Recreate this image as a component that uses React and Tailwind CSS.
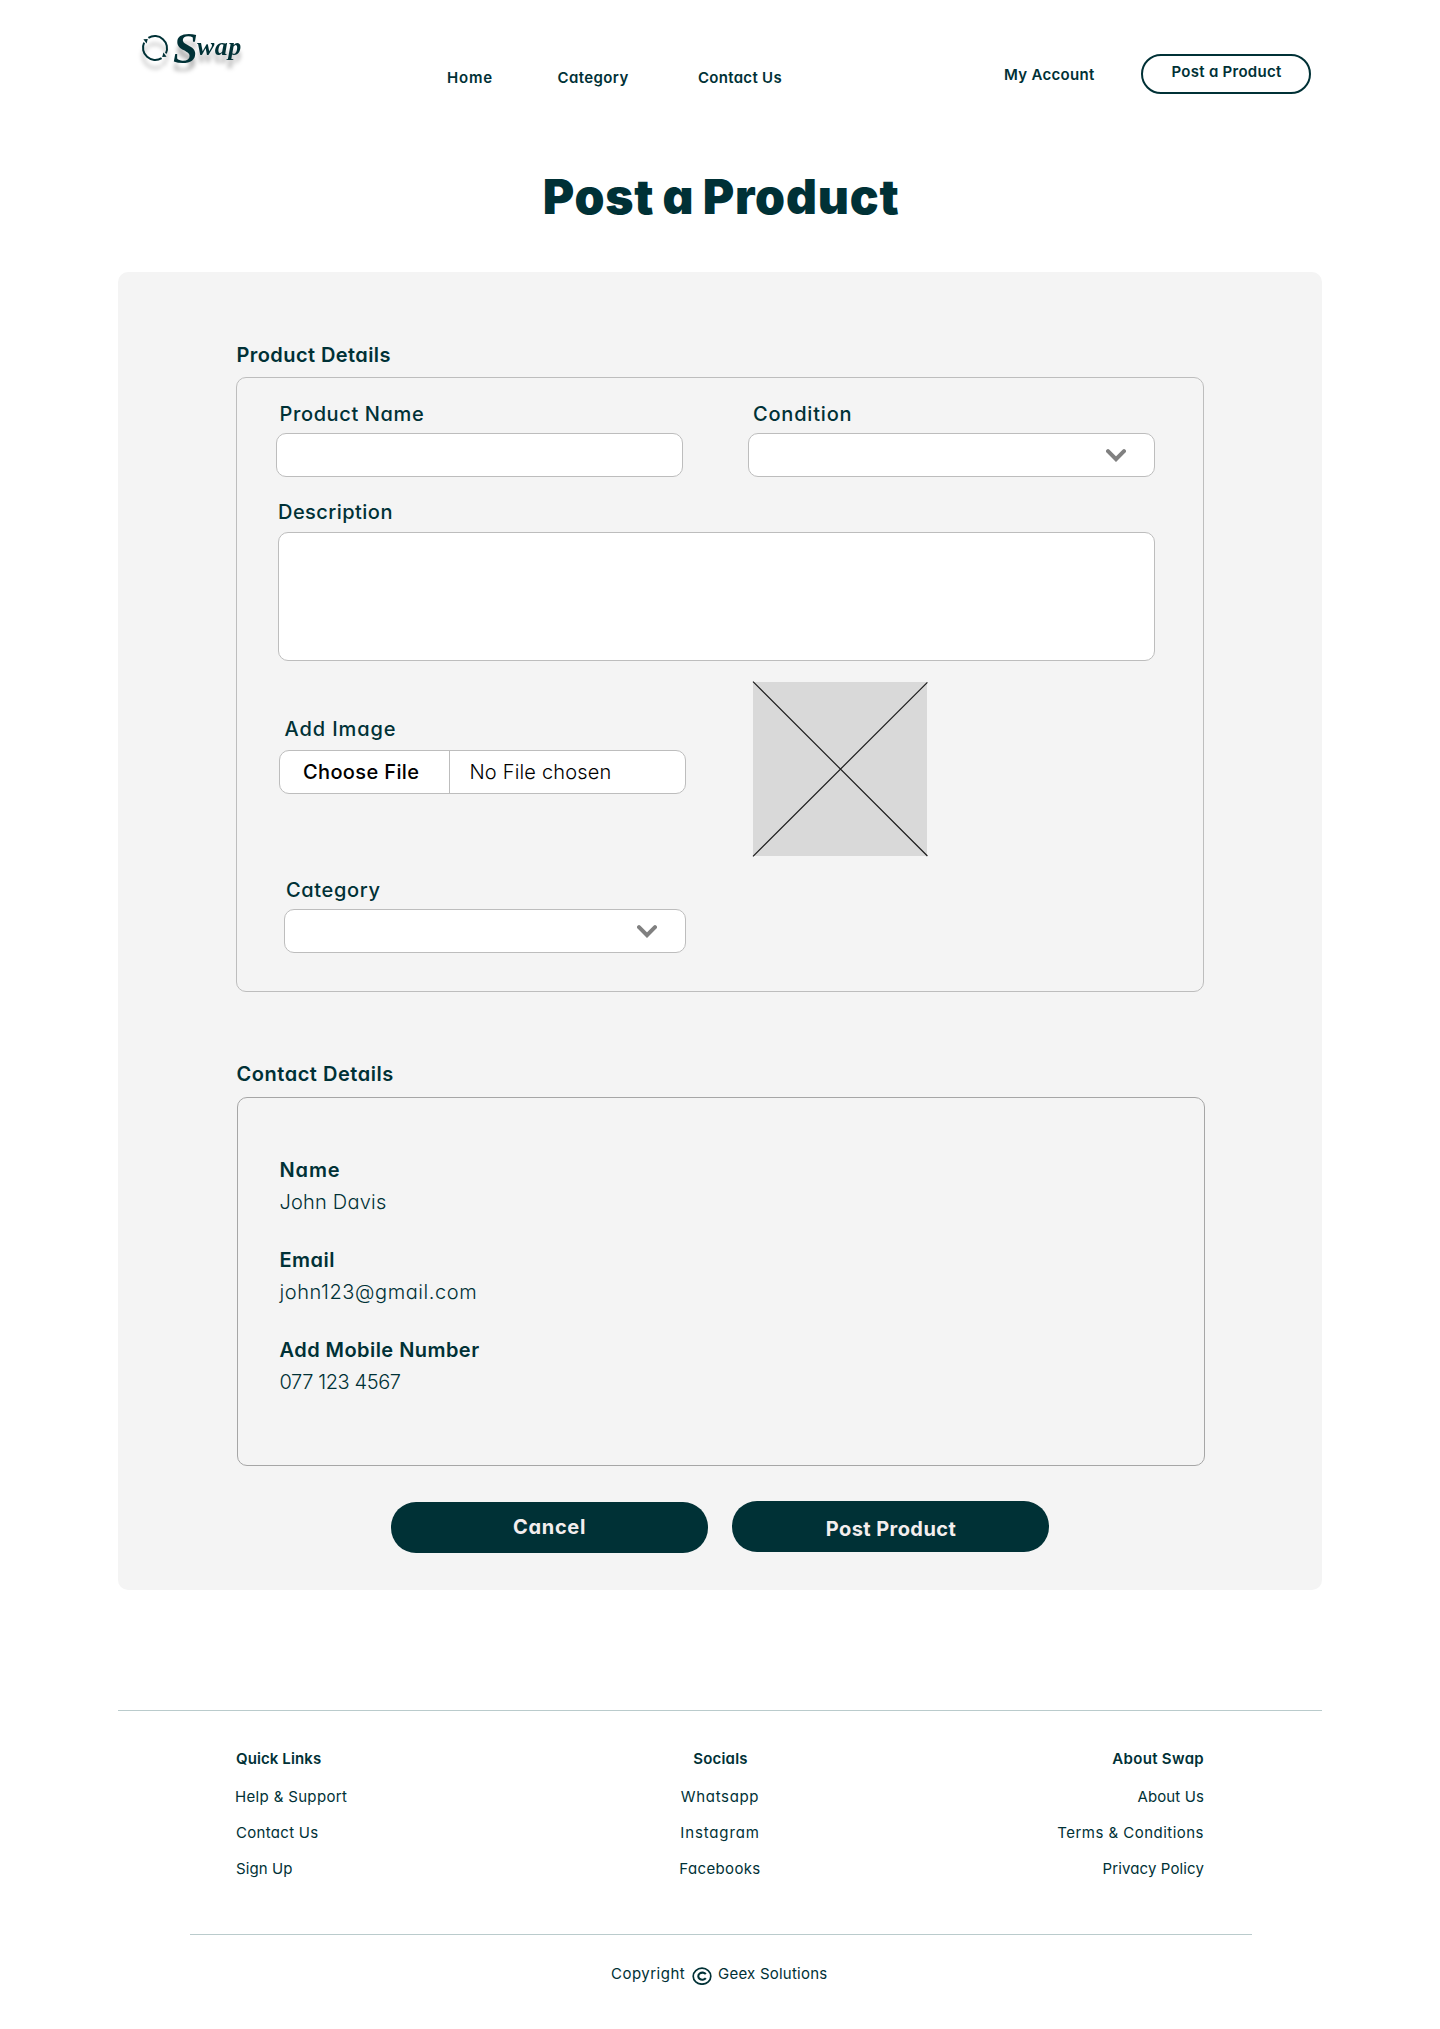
const FIELD = "rounded-[10px] border border-[#bdbdbd] bg-white";
const LABEL = "text-[20px] leading-6 font-medium whitespace-nowrap";
const LINK = "text-[15px] leading-[19px] whitespace-nowrap";

function Chevron() {
  return (
    <svg width="20" height="13" viewBox="0 0 20 13" fill="none" stroke="#808080" strokeWidth="4">
      <path d="M2 2.2 10 10.2 18 2.2" strokeLinecap="round" strokeLinejoin="miter" />
    </svg>
  );
}

function CopyrightMark() {
  return (
    <svg className="mt-[3px] mr-[6px] shrink-0" width="20" height="18" viewBox="0 0 20 18" fill="none" stroke="#003136">
      <ellipse cx="10" cy="9.2" rx="8.8" ry="8" strokeWidth="1.7" />
      <path d="M13.8 7.2A4.1 3.6 0 1 0 13.8 11.2" strokeWidth="2.1" />
    </svg>
  );
}

function Logo() {
  return (
    <div className="flex h-[50px] w-[305px] items-start pt-[9px] drop-shadow-[0_8px_2px_rgba(0,0,0,0.28)]">
      <svg className="mt-[-1px] -ml-px shrink-0" width="28" height="28" viewBox="0 0 28 28" fill="none" stroke="#003136" strokeWidth="2">
        <path d="M7.4 3.9A12.2 12.2 0 0 1 24.9 19.4" />
        <path d="M20.6 24.1A12.2 12.2 0 0 1 3.1 8.6" />
        <path d="M2.4 5.2 6.8 5 5.6 9.4Z" fill="#003136" stroke="none" />
        <path d="M25.6 22.8 21.2 23 22.4 18.6Z" fill="#003136" stroke="none" />
      </svg>
      <div className="ml-[4px] flex items-start font-['Liberation_Serif',serif] font-bold italic">
        <span className="mt-[-11px] text-[45px] leading-[48px]">S</span>
        <span className="-ml-px mt-[-3px] text-[26px] leading-[30px] tracking-[0.5px]">wap</span>
      </div>
    </div>
  );
}

function Header() {
  return (
    <header className="flex h-[167px] items-start pl-[142px] text-[15px] leading-[19px] font-semibold whitespace-nowrap">
      <div className="pt-[26px]"><Logo /></div>
      <nav className="flex pt-[68px]">
        <a className="w-[110.5px] tracking-[0.8px]">Home</a>
        <a className="w-[140.5px] tracking-[0.4px]">Category</a>
        <a className="w-[306px] tracking-[0.3px]">Contact Us</a>
      </nav>
      <a className="w-[137px] pt-[65px] tracking-[0.3px]">My Account</a>
      <button className="mt-[54px] flex h-10 w-[170px] justify-center rounded-[20px] border-2 border-[#003136] pt-[6px] pl-px tracking-[0.27px]">
        Post a Product
      </button>
    </header>
  );
}

function ProductDetails() {
  return (
    <section>
      <h2 className="pl-[0.5px] text-[20px] leading-6 font-semibold tracking-[0.42px]">Product Details</h2>
      <div className="mt-[10px] h-[615px] w-[968px] rounded-[10px] border border-[#bdbdbd] pt-6 pl-[39px]">
        <div className="flex gap-[65px]">
          <div>
            <div className={`${LABEL} pl-[3.5px] tracking-[0.62px]`}>Product Name</div>
            <div className={`${FIELD} mt-[7px] h-11 w-[407px]`} />
          </div>
          <div>
            <div className={`${LABEL} pl-[5px] tracking-[0.8px]`}>Condition</div>
            <div className={`${FIELD} mt-[7px] flex h-11 w-[407px] items-start justify-end pt-[15px] pr-[28px]`}>
              <Chevron />
            </div>
          </div>
        </div>
        <div className="mt-[23px] pl-[2px]">
          <div className={`${LABEL} tracking-[0.46px]`}>Description</div>
          <div className={`${FIELD} mt-2 h-[129px] w-[877px]`} />
        </div>
        <div className="mt-[21px] flex items-start gap-[67px] pl-[3px]">
          <div className="pt-[35px]">
            <div className={`${LABEL} pl-[5.5px] tracking-[0.9px]`}>Add Image</div>
            <div className={`${FIELD} mt-[9px] flex h-11 w-[407px] text-[20px] leading-6 whitespace-nowrap text-black`}>
              <div className="w-[170px] border-r border-[#bdbdbd] pt-[9px] pl-[23px] font-medium tracking-[0.36px]">Choose File</div>
              <div className="pt-[9px] pl-[19.5px] font-light tracking-[0.18px]">No File chosen</div>
            </div>
            <div className={`${LABEL} mt-[84px] pl-[7px] tracking-[0.65px]`}>Category</div>
            <div className={`${FIELD} mt-[7px] ml-[5px] flex h-11 w-[402px] items-start justify-end pt-[15px] pr-[28px]`}>
              <Chevron />
            </div>
          </div>
          <svg className="shrink-0 overflow-visible bg-[#d9d9d9]" width="174" height="174" stroke="#1c1c1c" strokeWidth="1.2">
            <path d="M0 -0.4 174.4 174M174.4 0.4 0 174.4" />
          </svg>
        </div>
      </div>
    </section>
  );
}

function ContactDetails() {
  return (
    <section className="mt-[70px] whitespace-nowrap">
      <h2 className="pl-[0.5px] text-[20px] leading-6 font-semibold tracking-[0.53px]">Contact Details</h2>
      <dl className="mt-[11px] ml-px h-[369px] w-[968px] rounded-[10px] border border-[#a6a6a6] pt-[60px] pl-[41.5px] text-[20px] leading-6">
        <dt className="font-semibold tracking-[0.9px]">Name</dt>
        <dd className="mt-2 font-light tracking-[0.2px]">John Davis</dd>
        <dt className="mt-[34px] font-semibold tracking-[0.5px]">Email</dt>
        <dd className="mt-2 font-light tracking-[0.57px]">john123@gmail.com</dd>
        <dt className="mt-[34px] font-semibold tracking-[0.45px]">Add Mobile Number</dt>
        <dd className="mt-2 font-light tracking-[-0.4px]">077 123 4567</dd>
      </dl>
    </section>
  );
}

function Footer() {
  return (
    <footer className="mx-[118px] mt-[120px] border-t border-[#bacbcc]">
      <div className="flex justify-between pt-[38px] pr-[118px] pl-[118px]">
        <div className={`${LINK} w-[300px]`}>
          <div className="font-semibold tracking-[0.1px]">Quick Links</div>
          <div className="-ml-px mt-[19px] tracking-[0.34px]">Help &amp; Support</div>
          <div className="mt-[17px] tracking-[0.3px]">Contact Us</div>
          <div className="mt-[17px] tracking-[0.08px]">Sign Up</div>
        </div>
        <div className={`${LINK} w-[300px] text-center`}>
          <div className="pl-px font-semibold tracking-[0.19px]">Socials</div>
          <div className="mt-[19px] tracking-[0.66px]">Whatsapp</div>
          <div className="mt-[17px] tracking-[0.85px]">Instagram</div>
          <div className="mt-[17px] tracking-[0.36px]">Facebooks</div>
        </div>
        <div className={`${LINK} w-[300px] text-right`}>
          <div className="font-semibold tracking-[0.32px]">About Swap</div>
          <div className="mt-[19px] tracking-[0.12px]">About Us</div>
          <div className="mt-[17px] tracking-[0.47px]">Terms &amp; Conditions</div>
          <div className="mt-[17px] tracking-[0.12px]">Privacy Policy</div>
        </div>
      </div>
      <div className={`${LINK} mt-[56px] mr-[70px] ml-[72px] flex border-t border-[#bacbcc] pt-[29px] pl-[421px]`}>
        <span className="w-[79px] tracking-[0.49px]">Copyright</span>
        <span className="flex pl-[2px]"><CopyrightMark /></span>
        <span className="tracking-[0.23px]">Geex Solutions</span>
      </div>
    </footer>
  );
}

export default function App() {
  return (
    <div className="h-[2029px] w-[1440px] overflow-hidden bg-white font-[Inter,sans-serif] text-[#003136] [font-feature-settings:'cv11']">
      <Header />
      <h1 className="pl-[2px] text-center text-[48px] leading-[59px] font-black tracking-[0.8px] [word-spacing:-2px]">Post a Product</h1>
      <main className="mx-[118px] mt-[46px] h-[1318px] rounded-[10px] bg-[#f4f4f4] pt-[71px] pl-[118px]">
        <ProductDetails />
        <ContactDetails />
        <div className="mt-[35px] flex items-start gap-6 pl-[155px] text-[20px] leading-6 font-bold text-[#f3eeee]">
          <button className="mt-px flex h-[51px] w-[317px] justify-center rounded-[25px] bg-[#003136] pt-[13px] tracking-[0.7px]">Cancel</button>
          <button className="flex h-[51px] w-[317px] justify-center rounded-[25px] bg-[#003136] pt-4 pl-px tracking-[0.42px]">Post Product</button>
        </div>
      </main>
      <Footer />
    </div>
  );
}
